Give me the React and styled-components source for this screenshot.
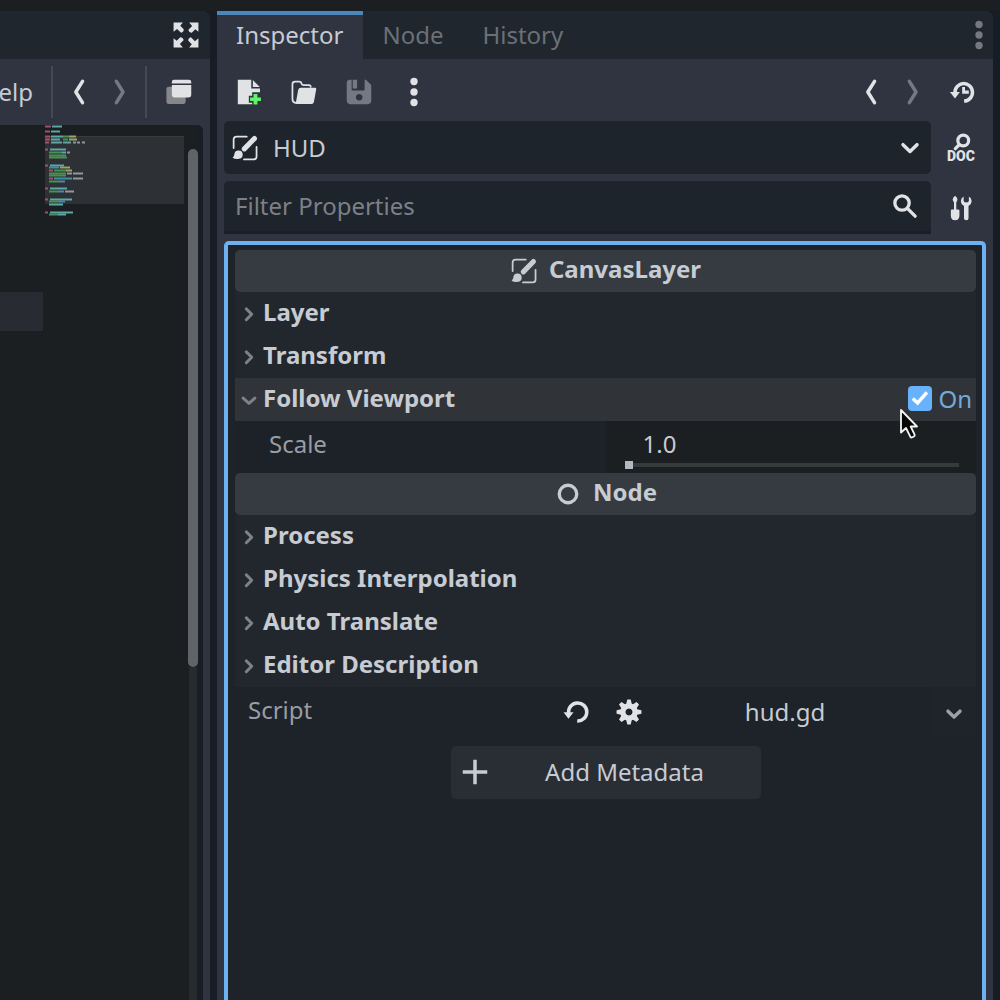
import React, { useState } from "react";
import styled, { createGlobalStyle } from "styled-components";

const c = {
  base: "#1b1f21",
  gutter: "#171d24",
  tabbar: "#20262d",
  surface: "#2f3440",
  field: "#1e242b",
  header: "#363b42",
  section: "#22272e",
  accent: "#6db1f1",
  text: "#c7cbd2",
  muted: "#9a9da1",
  dim: "#6b7078",
  icon: "#e0e2e6",
};

const GlobalStyle = createGlobalStyle`
  *, *::before, *::after { box-sizing: border-box; }
  body { margin: 0; background: ${c.base}; }
  button, input, select {
    font: inherit;
    color: inherit;
    margin: 0;
    padding: 0;
    border: 0;
    background: none;
    outline: none;
    appearance: none;
  }
`;

const Window = styled.div`
  display: grid;
  grid-template-columns: 210px minmax(0, 1fr);
  column-gap: 7px;
  height: 100vh;
  padding: 11px 7px 0 0;
  overflow: hidden;
  background: linear-gradient(${c.base} 11px, ${c.gutter} 11px);
  color: ${c.text};
  font: 400 24px/34px "Noto Sans", sans-serif;
`;

const Dock = styled.section`
  display: flex;
  flex-direction: column;
  min-width: 0;
  min-height: 0;
  overflow: hidden;
  background: ${c.surface};
  border-radius: 0 8px 0 0;
`;

const TabBar = styled.div`
  display: flex;
  flex: none;
  align-items: stretch;
  height: 48px;
  background: ${c.tabbar};
`;

const Tab = styled.button`
  padding: 0 20px 0 19px;
  color: ${(p) => (p.$active ? c.text : c.dim)};
  background: ${(p) => (p.$active ? c.surface : "transparent")};
  box-shadow: ${(p) => (p.$active ? "inset 0 4px #4b87bb" : "none")};
`;

const IconButton = styled.button`
  display: flex;
  flex: none;
  align-items: center;
  justify-content: center;
  width: 28px;
  color: ${(p) => (p.$dim ? "#747882" : c.icon)};
`;

const BarEnd = styled(IconButton)`
  margin-left: auto;
  margin-right: ${(p) => p.$inset || "0"};
`;

const Svg = styled.svg`
  display: block;
  flex: none;
  width: ${(p) => p.$size || "28px"};
  height: ${(p) => p.$size || "28px"};
  overflow: visible;
`;

const ScriptToolbar = styled.div`
  display: flex;
  flex: none;
  align-items: center;
  justify-content: flex-end;
  gap: 12px;
  height: 66px;
  padding-right: 17px;
`;

const MenuButton = styled.button`
  margin-right: 6px;
`;

const Divider = styled.span`
  flex: none;
  width: 2px;
  height: 52px;
  background: #434852;
`;

const WindowButton = styled(IconButton)`
  width: 34px;
  justify-content: flex-end;
`;

const Editor = styled.div`
  display: grid;
  grid-template-columns: 43px minmax(0, 1fr) 19px;
  flex: 1;
  margin-right: 7px;
  background: ${c.base};
  border-radius: 0 6px 0 0;
`;

const CurrentLine = styled.div`
  height: 39px;
  margin-top: 167px;
  background: #282c32;
`;

const Minimap = styled.div`
  padding-left: 2px;
`;

const MapSvg = styled.svg`
  display: block;
  width: 139px;
  height: 96px;
`;

const Scroll = styled.div`
  display: flex;
  flex-direction: column;
  align-items: center;
  padding: 24px 1px 0 0;
  background: linear-gradient(90deg, ${c.base} 13px, #191e26 13px);
  border-radius: 0 6px 0 0;
`;

const Thumb = styled.div`
  flex: none;
  width: 10px;
  height: 518px;
  border-radius: 5px;
  background: #606469;
`;

const Track = styled.div`
  flex: 1;
  width: 8px;
  background: #272b2f;
`;

const Body = styled.div`
  display: flex;
  flex: 1;
  flex-direction: column;
  min-height: 0;
  padding: 0 7px;
`;

const Toolbar = styled.div`
  display: flex;
  flex: none;
  align-items: center;
  gap: 27px;
  height: 62px;
  padding: 4px 10px 0 11px;
`;

const HistoryNav = styled.div`
  display: flex;
  gap: 13px;
  margin: 0 -5px 0 auto;
`;

const FieldRow = styled.div`
  display: flex;
  flex: none;
  height: 53px;
  margin-bottom: 7px;
`;

const Field = styled.label`
  display: flex;
  flex: 1;
  align-items: center;
  min-width: 0;
  padding: ${(p) => (p.$search ? "0 12px 3px 11px" : "0 7px")};
  background: ${c.field};
  border-radius: ${(p) => (p.$search ? "5px 5px 0 0" : "5px")};
  box-shadow: ${(p) => (p.$search ? "inset 0 -3px #1a1f27" : "none")};
  color: ${c.icon};
`;

const NodeSelect = styled.select`
  flex: 1;
  min-width: 0;
  height: 34px;
  margin-left: 14px;
  color: ${c.text};
`;

const SearchInput = styled.input`
  flex: 1;
  min-width: 0;
  height: 34px;
  &::placeholder {
    color: #7c8087;
    opacity: 1;
  }
`;

const SideButton = styled.button`
  display: flex;
  flex: none;
  flex-direction: column;
  align-items: center;
  justify-content: center;
  width: 50px;
  margin-left: 5px;
  color: ${c.icon};
`;

const DocLabel = styled.span`
  font: 900 14px/11px Roboto, sans-serif;
`;

const Properties = styled.div`
  display: flex;
  flex: 1;
  flex-direction: column;
  min-height: 0;
  padding: 5px 6px 0 7px;
  border: 4px solid ${c.accent};
  border-bottom: 0;
  border-radius: 5px 5px 0 0;
  background: #1e2229;
`;

const ClassHeader = styled.h2`
  display: flex;
  flex: none;
  align-items: center;
  justify-content: center;
  gap: 11px;
  height: 42px;
  margin: 0;
  border-radius: 5px;
  background: ${c.header};
  font-size: 24px;
  font-weight: 700;
`;

const Caption = styled.span`
  padding-bottom: 4px;
`;

const SectionRow = styled.div`
  position: relative;
  display: flex;
  flex: none;
  align-items: center;
  height: 43px;
  padding-right: 4px;
  background: ${(p) => (p.$open ? "#303439" : c.section)};
`;

const SectionToggle = styled.button`
  display: flex;
  flex: 1;
  align-items: center;
  font-weight: 700;
  text-align: left;
`;

const ArrowSlot = styled.span`
  display: flex;
  justify-content: center;
  width: 28px;
  color: #7d8188;
`;

const CheckLabel = styled.label`
  display: flex;
  align-items: center;
  gap: 6px;
  padding-bottom: 2px;
  color: #74a9dd;
`;

const CheckBox = styled.span`
  display: grid;
  width: 24px;
  height: 25px;
  color: #ffffff;
  > * { grid-area: 1 / 1; }
  svg { pointer-events: none; }
`;

const CheckInput = styled.input`
  border-radius: 4px;
  background: #464b52;
  &:checked { background: #67b2fa; }
`;

const Cursor = styled.svg`
  position: absolute;
  top: 30px;
  right: 57px;
  width: 20px;
  height: 32px;
  z-index: 1;
`;

const ScaleRow = styled.div`
  display: grid;
  grid-template-columns: 1fr 1fr;
  flex: none;
  height: 52px;
  background: #1d2228;
`;

const PropertyLabel = styled.label`
  padding: ${(p) => (p.$nested ? "6px 0 0 34px" : "6px 0 0 13px")};
  color: ${c.muted};
`;

const ScaleValue = styled.div`
  display: flex;
  flex-direction: column;
  padding: 6px 17px 0 19px;
  background: ${c.base};
`;

const NumberInput = styled.input`
  width: 100%;
  height: 34px;
  padding-left: 18px;
`;

const Slider = styled.input`
  width: 100%;
  height: 8px;
  &::-webkit-slider-runnable-track {
    height: 4px;
    background: #363a3f;
  }
  &::-webkit-slider-thumb {
    appearance: none;
    width: 8px;
    height: 8px;
    margin-top: -2px;
    background: #b5b8be;
  }
`;

const ScriptRow = styled.div`
  display: grid;
  grid-template-columns: minmax(0, 1fr) 53px 28px 288px 45px;
  flex: none;
  height: 50px;
`;

const ResourceButton = styled.button`
  padding-right: 4px;
`;

const DropButton = styled.button`
  display: flex;
  align-items: center;
  justify-content: center;
  padding-top: 3px;
  background: #1e242a;
  color: #9da1a7;
`;

const AddButton = styled.button`
  display: flex;
  flex: none;
  align-items: center;
  align-self: center;
  width: 310px;
  height: 53px;
  margin-top: 9px;
  padding: 0 0 2px 10px;
  border-radius: 5px;
  background: #292e35;
`;

const AddText = styled.span`
  flex: 1;
`;

const line = (w) => ({
  fill: "none",
  stroke: "currentColor",
  strokeWidth: w,
  strokeLinecap: "round",
  strokeLinejoin: "round",
});

const Icon = ({ size, children }) => (
  <Svg viewBox="0 0 16 16" $size={size} fill="currentColor" aria-hidden="true">
    {children}
  </Svg>
);

const ExpandIcon = () => (
  <Icon>
    {[0, 90, 180, 270].map((r) => (
      <path key={r} transform={`rotate(${r} 8 8)`} d="M.9.900h5.300L4.700 2.700l2 2Q6.800 6.300 5.200 6.700L2.900 4.500.9 6.200z" />
    ))}
  </Icon>
);

const BackIcon = () => (
  <Icon><path d="M10 1.900 6.200 8 10 14.100" {...line(2)} /></Icon>
);

const ForwardIcon = () => (
  <Icon><path d="M6.500 1.900 10.300 8l-3.800 6.100" {...line(2)} /></Icon>
);

const WindowsIcon = () => (
  <Icon>
    <rect x=".8" y="5" width="11" height="9.900" rx="1.400" fill="#85878a" />
    <path d="M3.900 3.200V2.300Q3.900 1 5.200 1h8.500Q15 1 15 2.300v.9zM3.900 4h11.100v5.700q0 1.400-1.300 1.400H5.300q-1.400 0-1.400-1.400z" />
  </Icon>
);

const NewIcon = () => (
  <Icon>
    <path d="M1.600 1h7.700v5h5v2.200h-4.500v2H7.900v3.900h1.900V15H1.600z" />
    <path d="M10.200 1.200v4h4z" />
    <path d="M10.600 9.100h2.200v2h2v2.100h-2v2h-2.200v-2h-2v-2.100h2z" fill="#5ff56b" />
  </Icon>
);

const FolderIcon = () => (
  <Icon>
    <path d="M3.200 14.200Q1.400 14 1.400 12V3.500Q1.400 2.100 2.900 2.100h2.600q.8 0 1 .9.200 1 1.200 1h3.200q.9 0 .9 1" {...line(1)} />
    <path d="M6.200 5.500h8.100q.8 0 .7.800l-1.300 7.200q-.2 1.300-1.500 1.300H3.200l1.500-8.100q.2-1.200 1.500-1.200z" />
  </Icon>
);

const SaveIcon = () => (
  <Icon>
    <path
      fillRule="evenodd"
      d="M1 2.400Q1.200 1.200 2.500 1h1.300v5.500q0 .6.600.6h6.200q.6 0 .6-.6V1h.8L15 4v9.300Q14.800 14.800 13.300 15H2.700Q1.200 14.800 1 13.300zM8.100 9.100a1.900 1.900 0 1 0 .01 0z"
    />
    <path d="M4.400 1h2.500v5H4.400z" />
  </Icon>
);

const DotsIcon = () => (
  <Icon>
    {[2, 8, 14].map((y) => <circle key={y} cx="8" cy={y} r="2.100" />)}
  </Icon>
);

const HistoryIcon = () => (
  <Icon>
    <path d="M4 8.600a5 5 0 1 1 5.200 4.600" {...line(2)} strokeLinecap="butt" />
    <path d="M1.100 8h5.700L4 11.700z" />
    <path d="M8.100 5.200h1.600v2h2.200v1.800H8.100z" />
  </Icon>
);

const ReloadIcon = () => (
  <Icon>
    <path d="M3.800 8.600a5.200 5.200 0 1 1 4.900 4.600" {...line(2)} strokeLinecap="butt" />
    <path d="M.9 8.200h5.700L3.700 11.900z" />
  </Icon>
);

const GearIcon = () => (
  <Icon>
    <path
      fillRule="evenodd"
      d="M8 3a5 5 0 1 0 .01 0zM8 6a2 2 0 1 1-.01 0z"
    />
    {[0, 45, 90, 135, 180, 225, 270, 315].map((r) => (
      <path key={r} transform={`rotate(${r} 8 8)`} d="M6.300 4 7 .9h2l.7 3.100z" />
    ))}
  </Icon>
);

const CanvasLayerIcon = () => (
  <Icon>
    <path d="M1.500 8V3.200q0-1.700 1.700-1.700H9M14.600 7.300v5.500q0 1.700-1.700 1.700H7.400" {...line(1)} />
    <path d="M13.400 2.600 7.600 8.500" {...line(2.9)} />
    <path d="M.9 13.400q1-.4 1-1.800a2.400 2.400 0 1 1 2.600 2.600Q2.200 14.700.9 13.400z" />
  </Icon>
);

const NodeIcon = () => (
  <Icon><circle cx="8" cy="8" r="5" {...line(1.9)} /></Icon>
);

const ChevronDown = ({ size, width = 2 }) => (
  <Icon size={size}><path d="M4 6.100 8 10l4-3.900" {...line(width)} /></Icon>
);

const SectionArrow = ({ open }) => (
  <Icon size="24px">
    <path d={open ? "M4.100 6.700 8 10.200l3.900-3.500" : "M6.200 4.600 9.800 8.200l-3.600 3.600"} {...line(2)} />
  </Icon>
);

const SearchIcon = () => (
  <Icon>
    <circle cx="6.300" cy="6.300" r="4.100" {...line(1.9)} />
    <path d="m9.500 9.500 4.300 4.300" {...line(1.9)} />
  </Icon>
);

const DocSearchIcon = () => (
  <Icon size="18px">
    <circle cx="10" cy="6.600" r="4.800" {...line(2.900)} />
    <path d="m6.400 10.500-3.400 3.400" {...line(3)} />
  </Icon>
);

const ToolsIcon = () => (
  <Icon>
    <path d="M4.600 1q1.300.8 1.400 2.300L5.300 4.800v4h1.100q.7 0 .7.600v3.200Q6.900 15 4.600 15T2.200 12.600V9.400q0-.6.600-.6h1.200v-4l-.800-1.500Q3.400 1.800 4.600 1z" />
    <path d="M9.500 1.400v2.500q0 .9 1.500.9t1.500-.9V1.400q1.600.9 1.600 2.700 0 1.700-1.800 2.800v7q0 1.100-1.300 1.100t-1.300-1.100v-7Q7.900 5.800 7.900 4.100q0-1.800 1.600-2.700z" />
  </Icon>
);

const PlusIcon = () => (
  <Icon><path d="M8 1v14M1 8h14" {...line(2)} strokeLinecap="butt" /></Icon>
);

const CheckIcon = () => (
  <Icon size="24px"><path d="m3.200 8.300 3.200 3 6.200-7" {...line(2.3)} strokeLinecap="butt" strokeLinejoin="miter" /></Icon>
);

const ink = { r: "#a84f68", c: "#5fa6a6", g: "#489150", y: "#9ba36b", b: "#498bac", w: "#93979a" };

const mapLines = [
  [1, "r", 0, 6, "c", 7, 10],
  [6, "r", 0, 5, "c", 6, 9],
  [11, "r", 0, 5, "c", 6, 12, "g", 18, 6, "y", 24, 7],
  [14, "r", 0, 5, "c", 6, 9, "g", 18, 5, "y", 24, 8],
  [17, "r", 0, 4, "c", 6, 11, "c", 18, 8, "w", 28, 3, "w", 32, 3, "w", 37, 3],
  [24, "r", 0, 3, "c", 5, 16],
  [27, "g", 4, 13, "c", 17, 4, "w", 22, 3],
  [30, "g", 4, 13, "b", 17, 4],
  [32, "g", 4, 18],
  [40, "r", 0, 3, "c", 5, 14],
  [42, "b", 4, 10, "y", 15, 10],
  [45, "r", 4, 4, "g", 9, 12, "y", 21, 6],
  [48, "g", 4, 17, "w", 22, 5, "w", 28, 10],
  [50, "g", 4, 17],
  [53, "r", 4, 4, "b", 9, 18, "w", 28, 10],
  [56, "g", 4, 10, "b", 14, 6],
  [63, "r", 0, 3, "c", 5, 17],
  [66, "g", 4, 9, "b", 13, 6, "w", 20, 9],
  [74, "r", 0, 3, "c", 5, 22],
  [76, "g", 4, 10, "b", 14, 6],
  [79, "c", 4, 14],
  [87, "r", 0, 3, "c", 5, 23],
  [89, "g", 4, 9, "c", 13, 8],
];

function CodeMap() {
  const marks = [];
  mapLines.forEach(([y, ...runs]) => {
    for (let i = 0; i < runs.length; i += 3) {
      marks.push(<rect key={`${y}-${i}`} x={runs[i + 1]} y={y - 0.5} width={runs[i + 2]} height="2" fill={ink[runs[i]]} />);
    }
  });
  return (
    <MapSvg viewBox="0 0 139 96" aria-hidden="true">
      <rect y="11" width="139" height="68" fill="#2d3034" />
      <rect y="11" width="139" height="1" fill="#3b3b3b" />
      {marks}
    </MapSvg>
  );
}

function Section({ title, open, children }) {
  return (
    <SectionRow $open={open}>
      <SectionToggle type="button" aria-expanded={!!open}>
        <ArrowSlot><SectionArrow open={open} /></ArrowSlot>
        <Caption>{title}</Caption>
      </SectionToggle>
      {children}
    </SectionRow>
  );
}

export default function App() {
  const [tab, setTab] = useState("Inspector");
  const [follow, setFollow] = useState(true);
  const [scale, setScale] = useState("1.0");

  return (
    <>
      <GlobalStyle />
      <Window>
        <Dock>
          <TabBar>
            <BarEnd type="button" $inset="10px" aria-label="Distraction free mode"><ExpandIcon /></BarEnd>
          </TabBar>
          <ScriptToolbar>
            <MenuButton type="button">Help</MenuButton>
            <Divider />
            <IconButton type="button" aria-label="Back"><BackIcon /></IconButton>
            <IconButton type="button" $dim aria-label="Forward"><ForwardIcon /></IconButton>
            <Divider />
            <WindowButton type="button" aria-label="Float window"><WindowsIcon /></WindowButton>
          </ScriptToolbar>
          <Editor>
            <CurrentLine />
            <Minimap><CodeMap /></Minimap>
            <Scroll>
              <Thumb />
              <Track />
            </Scroll>
          </Editor>
        </Dock>

        <Dock>
          <TabBar>
            {["Inspector", "Node", "History"].map((name) => (
              <Tab key={name} type="button" $active={tab === name} onClick={() => setTab(name)}>{name}</Tab>
            ))}
            <BarEnd type="button" $dim aria-label="Dock options"><DotsIcon /></BarEnd>
          </TabBar>
          <Body>
            <Toolbar>
              <IconButton type="button" aria-label="New resource"><NewIcon /></IconButton>
              <IconButton type="button" aria-label="Load resource"><FolderIcon /></IconButton>
              <IconButton type="button" $dim aria-label="Save resource"><SaveIcon /></IconButton>
              <IconButton type="button" aria-label="Resource options"><DotsIcon /></IconButton>
              <HistoryNav>
                <IconButton type="button" aria-label="Previous object"><BackIcon /></IconButton>
                <IconButton type="button" $dim aria-label="Next object"><ForwardIcon /></IconButton>
              </HistoryNav>
              <IconButton type="button" aria-label="Object history"><HistoryIcon /></IconButton>
            </Toolbar>

            <FieldRow>
              <Field>
                <CanvasLayerIcon />
                <NodeSelect aria-label="Edited object"><option>HUD</option></NodeSelect>
                <ChevronDown />
              </Field>
              <SideButton type="button">
                <DocSearchIcon />
                <DocLabel>DOC</DocLabel>
              </SideButton>
            </FieldRow>

            <FieldRow>
              <Field $search>
                <SearchInput type="text" placeholder="Filter Properties" aria-label="Filter Properties" />
                <SearchIcon />
              </Field>
              <SideButton type="button" aria-label="Property tools"><ToolsIcon /></SideButton>
            </FieldRow>

            <Properties>
              <ClassHeader><CanvasLayerIcon /><Caption>CanvasLayer</Caption></ClassHeader>
              <Section title="Layer" />
              <Section title="Transform" />
              <Section title="Follow Viewport" open>
                <CheckLabel>
                  <CheckBox>
                    <CheckInput type="checkbox" checked={follow} onChange={(e) => setFollow(e.target.checked)} />
                    {follow && <CheckIcon />}
                  </CheckBox>
                  On
                </CheckLabel>
                <Cursor viewBox="0 0 20 32" aria-hidden="true">
                  <path
                    d="M2 2v22.500l5-4.500 4.300 8.700q.7 1.200 2 .6l1.600-.8q1.200-.6.700-1.900L11.700 18.500H18z"
                    fill="#050505"
                    stroke="#f4f4f4"
                    strokeWidth="1.800"
                    strokeLinejoin="round"
                  />
                </Cursor>
              </Section>
              <ScaleRow>
                <PropertyLabel $nested htmlFor="scale">Scale</PropertyLabel>
                <ScaleValue>
                  <NumberInput id="scale" type="text" value={scale} onChange={(e) => setScale(e.target.value)} />
                  <Slider type="range" min="0" max="10" defaultValue="0" aria-label="Scale slider" />
                </ScaleValue>
              </ScaleRow>
              <ClassHeader><NodeIcon /><Caption>Node</Caption></ClassHeader>
              <Section title="Process" />
              <Section title="Physics Interpolation" />
              <Section title="Auto Translate" />
              <Section title="Editor Description" />
              <ScriptRow>
                <PropertyLabel htmlFor="script">Script</PropertyLabel>
                <IconButton type="button" aria-label="Revert script"><ReloadIcon /></IconButton>
                <IconButton type="button" aria-label="Script settings"><GearIcon /></IconButton>
                <ResourceButton id="script" type="button">hud.gd</ResourceButton>
                <DropButton type="button" aria-label="Script options"><ChevronDown size="24px" width={2.3} /></DropButton>
              </ScriptRow>
              <AddButton type="button">
                <PlusIcon />
                <AddText>Add Metadata</AddText>
              </AddButton>
            </Properties>
          </Body>
        </Dock>
      </Window>
    </>
  );
}
